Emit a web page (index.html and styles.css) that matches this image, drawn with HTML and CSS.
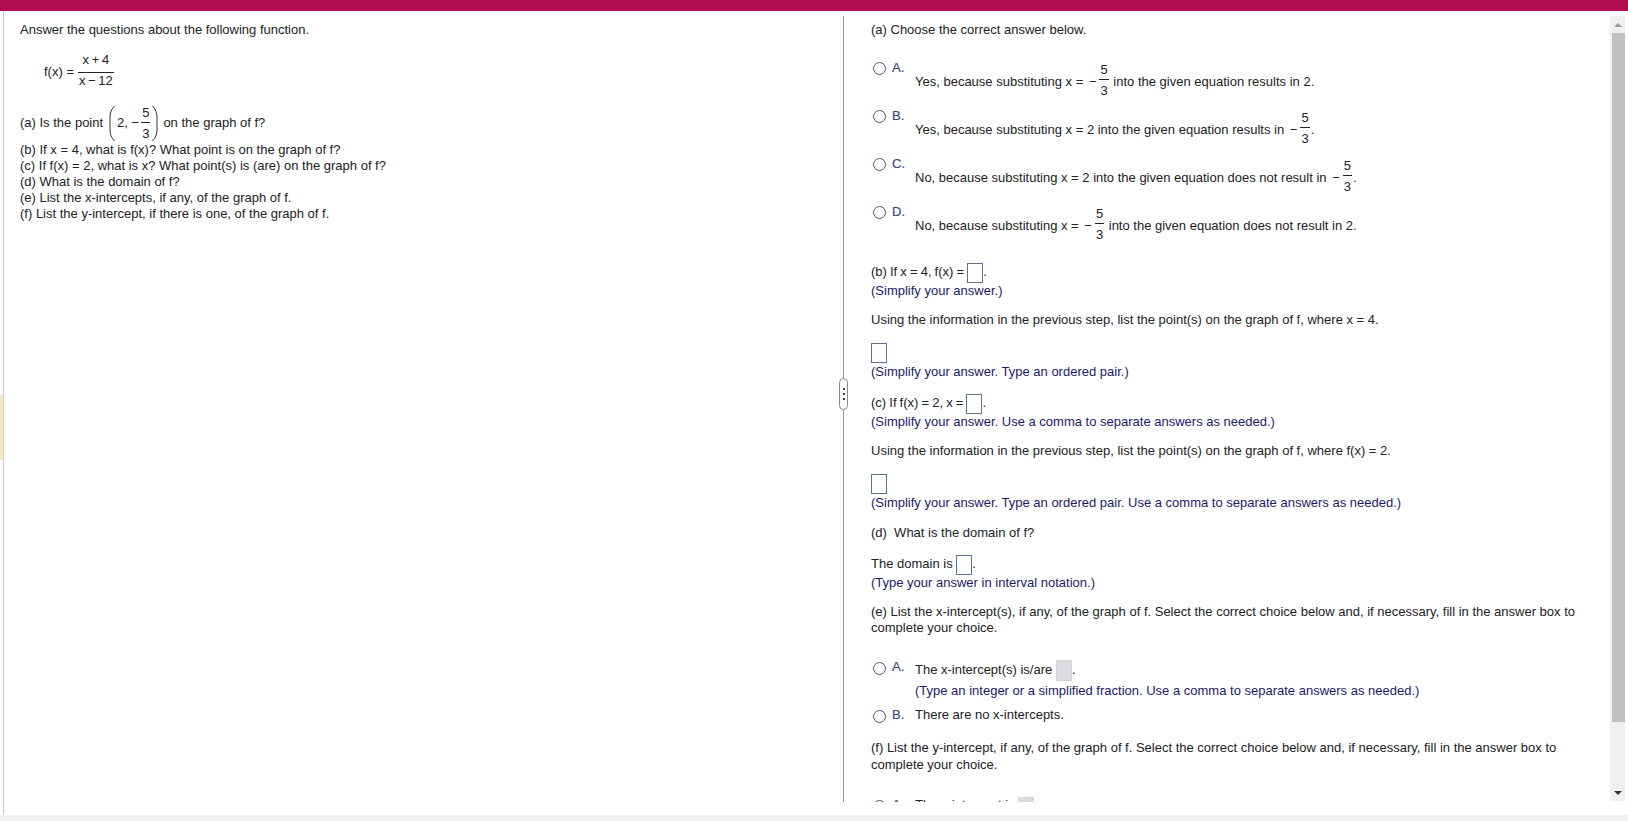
FILE: index.html
```html
<!DOCTYPE html>
<html>
<head>
    <title>Question</title>
    <link rel="stylesheet" href="styles.css">
</head>
<body>
    <div class="top-bar"></div>
    <div class="player">
        <div class="left-pane">
            <div class="flag"></div>
            <p class="intro">Answer the questions about the following function.</p>
            <div class="formula">
                <span class="fx">f(x) =</span>
                <span class="frac frac-wide"><span class="num">x + 4</span><span class="den">x − 12</span></span>
            </div>
            <div class="point-row">
                <span>(a) Is the point</span>
                <span class="paren-group">
                    <svg class="paren" width="6" height="37" viewBox="0 0 6 37"><path d="M5.5 1C2.5 4 1 8 1 12V25C1 29 2.5 33 5.5 36" fill="none" stroke="#333"/></svg>
                    <span>2, −</span>
                    <span class="frac"><span class="num">5</span><span class="den">3</span></span>
                    <svg class="paren" width="6" height="37" viewBox="0 0 6 37"><path d="M.5 1C3.5 4 5 8 5 12V25C5 29 3.5 33 .5 36" fill="none" stroke="#333"/></svg>
                </span>
                <span>on the graph of f?</span>
            </div>
            <p class="q">(b) If x = 4, what is f(x)? What point is on the graph of f?</p>
            <p class="q">(c) If f(x) = 2, what is x? What point(s) is (are) on the graph of f?</p>
            <p class="q">(d) What is the domain of f?</p>
            <p class="q">(e) List the x-intercepts, if any, of the graph of f.</p>
            <p class="q">(f) List the y-intercept, if there is one, of the graph of f.</p>
        </div>

        <div class="divider">
            <div class="handle"><i></i><i></i><i></i></div>
        </div>

        <div class="right-pane">
            <p class="line first">(a) Choose the correct answer below.</p>

            <div class="choices">
                <div class="choice">
                    <span class="radio"></span><span class="letter">A.</span>
                    <span class="choice-text">Yes, because substituting x = <span class="minus">−</span><span class="frac"><span class="num">5</span><span class="den">3</span></span> into the given equation results in 2.</span>
                </div>
                <div class="choice">
                    <span class="radio"></span><span class="letter">B.</span>
                    <span class="choice-text">Yes, because substituting x = 2 into the given equation results in <span class="minus">−</span><span class="frac"><span class="num">5</span><span class="den">3</span></span>.</span>
                </div>
                <div class="choice">
                    <span class="radio"></span><span class="letter">C.</span>
                    <span class="choice-text">No, because substituting x = 2 into the given equation does not result in <span class="minus">−</span><span class="frac"><span class="num">5</span><span class="den">3</span></span>.</span>
                </div>
                <div class="choice">
                    <span class="radio"></span><span class="letter">D.</span>
                    <span class="choice-text">No, because substituting x = <span class="minus">−</span><span class="frac"><span class="num">5</span><span class="den">3</span></span> into the given equation does not result in 2.</span>
                </div>
            </div>

            <div class="answer-line sec-b">(b) If x = 4, f(x) = <span class="box"></span>.</div>
            <p class="hint">(Simplify your answer.)</p>
            <p class="line gap">Using the information in the previous step, list the point(s) on the graph of f, where x = 4.</p>
            <div class="box-row"><span class="box box-big"></span></div>
            <p class="hint">(Simplify your answer. Type an ordered pair.)</p>

            <div class="answer-line sec-c">(c) If f(x) = 2, x = <span class="box"></span>.</div>
            <p class="hint">(Simplify your answer. Use a comma to separate answers as needed.)</p>
            <p class="line gap">Using the information in the previous step, list the point(s) on the graph of f, where f(x) = 2.</p>
            <div class="box-row"><span class="box box-big"></span></div>
            <p class="hint">(Simplify your answer. Type an ordered pair. Use a comma to separate answers as needed.)</p>

            <p class="line gap-d">(d)&nbsp; What is the domain of f?</p>
            <div class="answer-line sec-d">The domain is <span class="box"></span>.</div>
            <p class="hint">(Type your answer in interval notation.)</p>

            <p class="line gap para">(e) List the x-intercept(s), if any, of the graph of f. Select the correct choice below and, if necessary, fill in the answer box to complete your choice.</p>

            <div class="fill-choices">
                <div class="fill-choice">
                    <span class="radio"></span><span class="letter">A.</span>
                    <div>
                        <div class="answer-line">The x-intercept(s) is/are <span class="box box-off"></span>.</div>
                        <p class="hint hint-tight">(Type an integer or a simplified fraction. Use a comma to separate answers as needed.)</p>
                    </div>
                </div>
                <div class="fill-choice choice-b">
                    <span class="radio"></span><span class="letter">B.</span>
                    <div>There are no x-intercepts.</div>
                </div>
            </div>

            <p class="line gap-f para para-f">(f) List the y-intercept, if any, of the graph of f. Select the correct choice below and, if necessary, fill in the answer box to complete your choice.</p>

            <div class="fill-choices fill-last">
                <div class="fill-choice">
                    <span class="radio"></span><span class="letter">A.</span>
                    <div>
                        <div class="answer-line">The y-intercept is <span class="box box-off"></span>.</div>
                    </div>
                </div>
            </div>
        </div>

        <div class="scrollbar">
            <div class="arrow arrow-up"></div>
            <div class="track"><div class="thumb"></div></div>
            <div class="arrow arrow-down"></div>
        </div>
    </div>
    <div class="bottom-strip"></div>
</body>
</html>
```

FILE: styles.css
```css
html, body {
    height: 100%;
}

body {
    margin: 0;
    padding: 0;
    font-family: "Liberation Sans", Arial, sans-serif;
    font-size: 13px;
    line-height: 16px;
    color: #222;
    background-color: #fff;
    display: flex;
    flex-direction: column;
    overflow: hidden;
}

p {
    margin: 0;
}

.top-bar {
    height: 11px;
    background-color: #b00b4c;
    flex: none;
}

.player {
    flex: 1;
    min-height: 0;
    display: flex;
    padding-top: 5px;
    padding-bottom: 13px;
}

.bottom-strip {
    height: 6px;
    background-color: #f2f2f2;
    flex: none;
}

/* left side */
.left-pane {
    width: 840px;
    margin-left: 3px;
    margin-top: -5px;
    margin-bottom: -13px;
    padding: 11px 0 0 16px;
    box-sizing: border-box;
    border-left: 1px solid #ccc;
    position: relative;
}

.flag {
    position: absolute;
    left: -4px;
    top: 384px;
    width: 3px;
    height: 65px;
    background-color: #f8e8bd;
}

.formula {
    display: flex;
    align-items: center;
    gap: 4px;
    margin: 14px 0 0 24px;
    height: 37px;
}

.fx {
    margin-top: 3px;
}

.frac {
    display: inline-flex;
    flex-direction: column;
    align-items: center;
    vertical-align: middle;
    line-height: 16px;
}

.num {
    display: block;
    padding: 0 1px 1px;
    border-bottom: 1px solid #222;
}

.den {
    display: block;
    padding: 3px 1px 0;
}

.frac-wide {
    word-spacing: -1px;
}

.frac-wide .num {
    align-self: stretch;
    text-align: center;
    padding-bottom: 4px;
}

.frac-wide .den {
    align-self: stretch;
    text-align: center;
    padding-top: 0;
}

.point-row {
    display: flex;
    align-items: center;
    gap: 6px;
    margin-top: 15px;
    height: 38px;
}

.paren-group {
    display: inline-flex;
    align-items: center;
    gap: 2px;
    margin-right: -1px;
}

/* divider with drag handle */
.divider {
    width: 1px;
    background-color: #999;
    flex: none;
    position: relative;
}

.handle {
    position: absolute;
    left: -4px;
    top: 362px;
    width: 7px;
    height: 30px;
    border: 1px solid #888;
    border-radius: 5px;
    background-color: #fff;
    display: flex;
    flex-direction: column;
    align-items: center;
    justify-content: center;
    gap: 3px;
}

.handle i {
    width: 2px;
    height: 2px;
    background-color: #444;
}

/* right side */
.right-pane {
    width: 739px;
    margin-left: 27px;
    overflow: hidden;
}

.line.first {
    margin-top: 6px;
}

.choices {
    margin-top: 22px;
}

.choice {
    height: 48px;
    display: flex;
    align-items: flex-start;
}

.radio {
    width: 11px;
    height: 11px;
    border: 1px solid #44597c;
    border-radius: 50%;
    margin: 2px 6px 0 2px;
    flex: none;
    background-color: #fff;
}

.letter {
    width: 23px;
    flex: none;
    color: #3a4a80;
    -webkit-text-stroke: 0.2px #3a4a80;
}

.choice-text {
    margin-top: 2px;
    white-space: nowrap;
}

.minus {
    margin: 0 3px 0 2px;
}

.choice-text .frac {
    margin: 0 1px 4px 0;
}

.hint {
    color: #1c1a66;
}

.answer-line {
    height: 22px;
    line-height: 22px;
    white-space: nowrap;
}

.box {
    display: inline-block;
    width: 14px;
    height: 18px;
    border: 1px solid #5a7391;
    vertical-align: middle;
}

.box-off {
    height: 19px;
    border-color: #d4d4d8;
    background-color: #dcdce0;
}

.box-row {
    margin-top: 15px;
    height: 21px;
    line-height: 0;
}

.gap {
    margin-top: 13px;
}

.gap-d {
    margin-top: 14px;
}

.gap-f {
    margin-top: 16px;
}

.sec-b {
    margin-top: 9px;
    word-spacing: -0.5px;
}

.sec-c {
    margin-top: 12px;
    word-spacing: -0.5px;
}

.sec-d {
    margin-top: 12px;
}

.para {
    padding-right: 30px;
}

.para-f {
    line-height: 17px;
}

.fill-choices {
    margin-top: 23px;
}

.fill-last {
    margin-top: 24px;
}

.fill-last .answer-line {
    line-height: 16px;
}

.fill-last .box-off {
    vertical-align: top;
}

.fill-last .radio {
    margin-top: 2px;
}

.fill-choice {
    display: flex;
    align-items: flex-start;
}

.fill-choice .radio {
    margin-top: 3px;
}

.choice-b {
    margin-top: 8px;
}

.hint-tight {
    margin-top: 2px;
}

/* scrollbar */
.scrollbar {
    width: 15px;
    margin-bottom: 1px;
    background-color: #f0f0f0;
    display: flex;
    flex-direction: column;
    flex: none;
}

.arrow {
    height: 17px;
    flex: none;
    display: flex;
    align-items: center;
    justify-content: center;
}

.arrow-up::before {
    content: "";
    border: 4px solid transparent;
    border-top: none;
    border-bottom: 4px solid #999;
}

.arrow-down::before {
    content: "";
    border: 4px solid transparent;
    border-bottom: none;
    border-top: 4px solid #333;
}

.track {
    flex: 1;
}

.thumb {
    height: 689px;
    margin-left: 2px;
    background-color: #c1c1c1;
}
```
